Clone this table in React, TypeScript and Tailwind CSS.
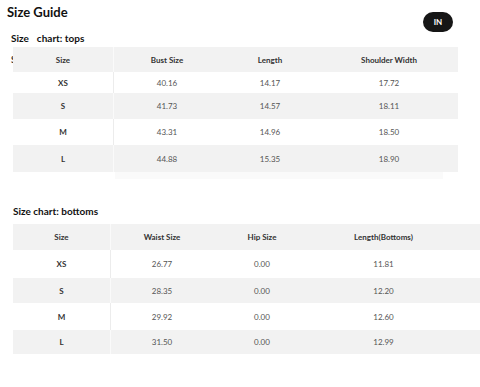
import React from "react";

const font = { fontFamily: "Lato, 'Open Sans', Arial, sans-serif" };

type Row = string[];

function Table({
  cols,
  head,
  rows,
  heights,
  headH,
}: {
  cols: string;
  head: string[];
  rows: Row[];
  heights: string[];
  headH: string;
}) {
  return (
    <div className="flex flex-col">
      <div className={`grid ${cols} ${headH} bg-[#f2f2f2]`}>
        {head.map((h, i) => (
          <div
            key={i}
            className={`flex items-center justify-center text-[8px] font-bold text-[#333] ${
              i === 0 ? "border-r border-[#fafafa]" : ""
            }`}
          >
            {h}
          </div>
        ))}
      </div>
      {rows.map((r, ri) => (
        <div
          key={ri}
          className={`grid ${cols} ${heights[ri]} ${ri % 2 === 1 ? "bg-[#f2f2f2]" : "bg-white"}`}
        >
          {r.map((c, ci) => (
            <div
              key={ci}
              className={`flex items-center justify-center text-[8px] ${
                ci === 0 ? "font-bold text-[#333]" : "text-[#555]"
              } ${ci === 0 ? (ri % 2 === 1 ? "border-r border-[#fafafa]" : "border-r border-[#ececec]") : ""}`}
            >
              {c}
            </div>
          ))}
        </div>
      ))}
    </div>
  );
}

export default function App() {
  return (
    <div className="w-[480px] h-[387px] bg-white overflow-hidden" style={font}>
      <div className="flex justify-between items-start pl-[7px] pr-[27px] pt-[4px]">
        <div className="text-[13px] leading-[17px] font-bold text-[#111]">Size Guide</div>
        <div className="mt-[8px] w-[30px] h-[20px] rounded-full bg-[#161616] text-white text-[8px] font-bold flex items-center justify-center">
          IN
        </div>
      </div>
      <div className="pl-[11px] text-[10px] leading-[12px] font-bold text-[#111] flex">
        <span>Size</span>
        <span className="ml-[8px]">chart: tops</span>
      </div>
      <div className="mt-[3px] flex">
        <div className="w-[13px] h-[25px] overflow-hidden flex items-center">
          <span className="ml-[11px] text-[9px] font-bold text-[#333]">Size</span>
        </div>
        <Table
          cols="grid-cols-[101px_106px_100px_138px]"
          head={["Size", "Bust Size", "Length", "Shoulder Width"]}
          rows={[
            ["XS", "40.16", "14.17", "17.72"],
            ["S", "41.73", "14.57", "18.11"],
            ["M", "43.31", "14.96", "18.50"],
            ["L", "44.88", "15.35", "18.90"],
          ]}
          headH="h-[25px]"
          heights={["h-[21px]", "h-[26px]", "h-[26px]", "h-[27px]"]}
        />
      </div>
      <div className="ml-[115px] w-[328px] h-[7px] bg-[#fafafa]" />
      <div className="mt-[26px] pl-[13px] text-[10px] leading-[12px] font-bold text-[#111]">
        Size chart: bottoms
      </div>
      <div className="mt-[7px] pl-[13px]">
        <Table
          cols="grid-cols-[98px_102px_98px_145px]"
          head={["Size", "Waist Size", "Hip Size", "Length(Bottoms)"]}
          rows={[
            ["XS", "26.77", "0.00", "11.81"],
            ["S", "28.35", "0.00", "12.20"],
            ["M", "29.92", "0.00", "12.60"],
            ["L", "31.50", "0.00", "12.99"],
          ]}
          headH="h-[26px]"
          heights={["h-[28px]", "h-[25px]", "h-[27px]", "h-[24px]"]}
        />
      </div>
    </div>
  );
}
